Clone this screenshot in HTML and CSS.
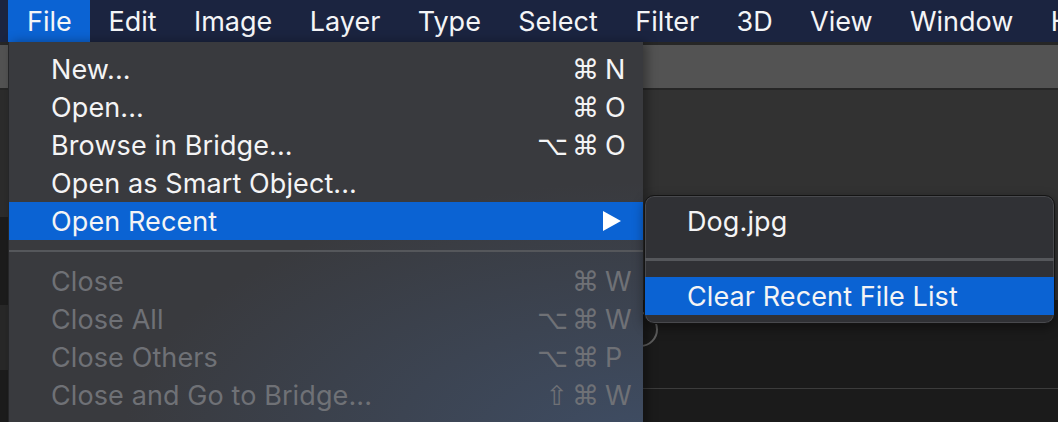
FILE: index.html
```html
<!DOCTYPE html>
<html lang="en">
<head>
<meta charset="utf-8">
<title>File menu</title>
<link rel="stylesheet" href="styles.css">
</head>
<body>
<div class="app">
  <header class="menubar">
    <span class="mb-item is-active">File</span>
    <span class="mb-item">Edit</span>
    <span class="mb-item">Image</span>
    <span class="mb-item">Layer</span>
    <span class="mb-item">Type</span>
    <span class="mb-item">Select</span>
    <span class="mb-item">Filter</span>
    <span class="mb-item">3D</span>
    <span class="mb-item">View</span>
    <span class="mb-item">Window</span>
    <span class="mb-item">H</span>
  </header>

  <div class="workspace">
    <div class="optionsbar"></div>
    <div class="main">
      <div class="toolbar">
        <div class="tb-band tb-a"></div>
        <div class="tb-band tb-b"></div>
        <div class="tb-band tb-c"></div>
        <div class="tb-band tb-d"></div>
      </div>
      <div class="doc">
        <div class="doc-top"></div>
        <div class="doc-bottom">
          <div class="ring"></div>
          <div class="rule"></div>
        </div>
      </div>
    </div>
  </div>

  <div class="menu">
    <div class="item"><span class="label">New...</span><span class="sc"><span class="mods">⌘</span><span class="key">N</span></span></div>
    <div class="item"><span class="label">Open...</span><span class="sc"><span class="mods">⌘</span><span class="key">O</span></span></div>
    <div class="item"><span class="label">Browse in Bridge...</span><span class="sc"><span class="mods">⌥⌘</span><span class="key">O</span></span></div>
    <div class="item"><span class="label">Open as Smart Object...</span></div>
    <div class="item is-hl"><span class="label">Open Recent</span><span class="sc"><span class="mods"></span><span class="key"><span class="arrow"></span></span></span></div>
    <div class="sep"></div>
    <div class="item is-off"><span class="label">Close</span><span class="sc"><span class="mods">⌘</span><span class="key">W</span></span></div>
    <div class="item is-off"><span class="label">Close All</span><span class="sc"><span class="mods">⌥⌘</span><span class="key">W</span></span></div>
    <div class="item is-off"><span class="label">Close Others</span><span class="sc"><span class="mods">⌥⌘</span><span class="key">P</span></span></div>
    <div class="item is-off"><span class="label">Close and Go to Bridge...</span><span class="sc"><span class="mods">⇧⌘</span><span class="key">W</span></span></div>
  </div>

  <div class="submenu">
    <div class="item"><span class="label">Dog.jpg</span></div>
    <div class="sub-sep"></div>
    <div class="item is-hl"><span class="label">Clear Recent File List</span></div>
  </div>
</div>
</body>
</html>
```

FILE: styles.css
```css
* { box-sizing: border-box; }

html, body {
  margin: 0;
  padding: 0;
  width: 1058px;
  height: 422px;
  overflow: hidden;
  background: #1c1c1c;
}

.app {
  position: relative;
  width: 1058px;
  height: 422px;
  display: flex;
  flex-direction: column;
  font-family: "Inter", "Noto Sans", "DejaVu Sans", sans-serif;
  color: #f2f2f3;
}

/* ---------- menu bar ---------- */
.menubar {
  height: 42px;
  flex: 0 0 42px;
  background: #1b2440;
  display: flex;
  align-items: stretch;
  padding-left: 8px;
  white-space: nowrap;
  overflow: hidden;
}

.mb-item {
  display: flex;
  align-items: center;
  padding: 0 18.7px;
  font-size: 27px;
  line-height: 1;
  color: #f4f5f7;
}

.mb-item.is-active {
  background: #0b63d3;
  padding-left: 19px;
  padding-right: 18px;
}

/* ---------- workspace (behind menus) ---------- */
.workspace {
  flex: 1;
  display: flex;
  flex-direction: column;
}

.optionsbar {
  height: 48px;
  flex: 0 0 48px;
  background: #535353;
  border-top: 3px solid #262626;
  border-bottom: 2px solid #262626;
}

.main {
  flex: 1;
  display: flex;
}

.toolbar {
  width: 60px;
  display: flex;
  flex-direction: column;
}

.tb-band { width: 100%; }
.tb-a { height: 127px; background: #2c2c2c; }
.tb-b { height: 88px; background: #1c1c1c; }
.tb-c { height: 65px; background: #282828; }
.tb-d { flex: 1; background: #1c1c1c; }

.doc {
  flex: 1;
  display: flex;
  flex-direction: column;
}

.doc-top {
  height: 210px;
  background: #323232;
}

.doc-bottom {
  position: relative;
  flex: 1;
  background: #1b1b1b;
  padding-top: 88px;
}

.ring {
  position: absolute;
  left: 563px;
  top: 12px;
  width: 35px;
  height: 35px;
  border: 2px solid #5f5f5f;
  border-radius: 50%;
}

.rule {
  height: 1px;
  background: #3c3c3c;
}

/* ---------- dropdown menu ---------- */
.menu {
  position: absolute;
  left: 8px;
  top: 42px;
  width: 635px;
  height: 400px;
  padding-top: 8px;
  background:
    radial-gradient(ellipse 520px 260px at 100% 100%, rgba(63, 78, 102, 0.95) 0%, rgba(58, 59, 63, 0) 100%),
    #393a3e;
  border-left: 1px solid #252628;
  box-shadow: 4px 0 10px rgba(0, 0, 0, 0.35);
  z-index: 2;
}

.item {
  height: 38px;
  display: flex;
  align-items: center;
  justify-content: space-between;
  padding-left: 42px;
  font-size: 27px;
  letter-spacing: 0.1px;
  line-height: 1;
  color: #f4f4f5;
  white-space: nowrap;
}

.item.is-hl {
  background: #0b63d3;
}

.item.is-off {
  color: #6f7176;
}

.sc {
  display: flex;
  align-items: center;
  letter-spacing: 0;
}

.mods {
  display: flex;
  justify-content: flex-end;
  letter-spacing: 4px;
  font-family: "DejaVu Sans", sans-serif;
  font-size: 27px;
}

.key {
  width: 38px;
  margin-left: 2px;
  display: flex;
  align-items: center;
}

.arrow {
  width: 0;
  height: 0;
  border-left: 18px solid #ffffff;
  border-top: 10px solid transparent;
  border-bottom: 10px solid transparent;
  margin-left: -2px;
}

.sep {
  height: 2px;
  margin: 10px 0 10px;
  background: #55575b;
}

/* ---------- submenu ---------- */
.submenu {
  position: absolute;
  left: 644px;
  top: 195px;
  width: 411px;
  padding: 6px 0 8px;
  background: #303135;
  border: 1px solid #141414;
  border-radius: 10px;
  box-shadow: inset 0 0 0 1px #48494d, 0 4px 12px rgba(0, 0, 0, 0.4);
  overflow: hidden;
  z-index: 3;
}

.submenu .item {
  padding-left: 42px;
}

.sub-sep {
  height: 3px;
  margin: 18px 0 16px;
  background: #55575b;
}
```
